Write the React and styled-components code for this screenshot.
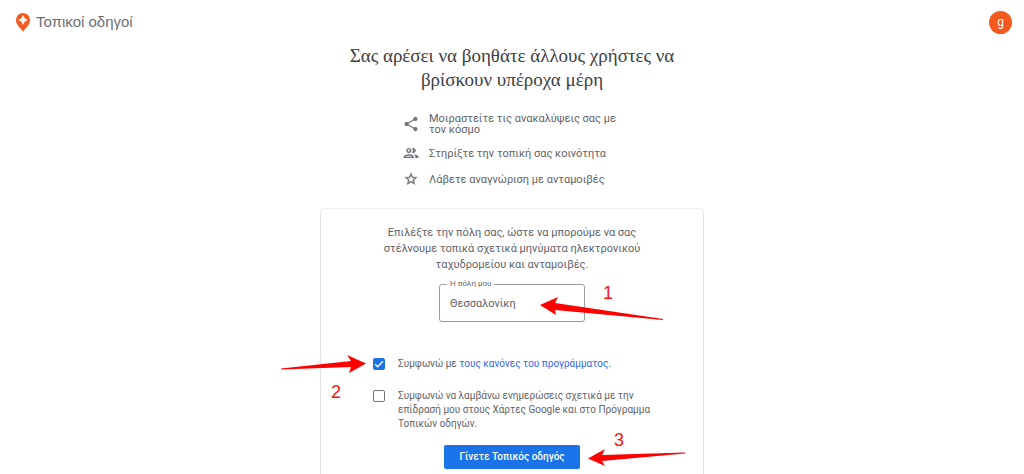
import React from "react";
import styled, { createGlobalStyle } from "styled-components";

const GlobalStyle = createGlobalStyle`
  *, *::before, *::after { box-sizing: border-box; }
  html { scrollbar-width: none; }
  body {
    margin: 0;
    background: #fff;
    color: #5f6368;
    font-family: Roboto, "Noto Sans", sans-serif;
    font-size: 11px;
  }
`;

const Page = styled.div`
  min-height: 100vh;
  display: flex;
  flex-direction: column;
`;

const Header = styled.header`
  display: flex;
  align-items: center;
  justify-content: space-between;
  height: 44px;
  padding: 0 12px 0 16px;
`;

const Brand = styled.a`
  display: flex;
  align-items: center;
  gap: 6px;
  color: #6b6f74;
  font: 15px/20px "Liberation Sans", sans-serif;
  text-decoration: none;
`;

const Avatar = styled.button`
  width: 23px;
  height: 23px;
  padding: 0;
  border: 0;
  border-radius: 50%;
  background: #f4591f;
  color: #fff;
  font: 12px/20px Roboto, sans-serif;
`;

const Main = styled.main`
  display: flex;
  flex: 1;
  flex-direction: column;
  align-items: center;
`;

const Title = styled.h1`
  max-width: 360px;
  margin: 0;
  color: #3c4043;
  font: 400 19px/24px "Liberation Serif", serif;
  text-align: center;
`;

const Benefits = styled.ul`
  display: flex;
  flex-direction: column;
  gap: 10px;
  width: 218px;
  margin: 21px 0 0;
  padding: 0;
  list-style: none;
`;

const Benefit = styled.li`
  display: flex;
  align-items: center;
  gap: 10px;
  min-height: 16px;
  line-height: 11px;

  svg {
    flex: none;
  }
`;

const Card = styled.section`
  position: relative;
  display: flex;
  flex: 1;
  flex-direction: column;
  align-items: center;
  width: 100%;
  max-width: 384px;
  margin-top: 21px;
  padding: 16px 52px 24px;
  border: 1px solid #dfe1e5;
  border-top-color: #eceef0;
  border-radius: 5px;
`;

const Intro = styled.p`
  margin: 0;
  line-height: 16px;
  text-align: center;
`;

const Field = styled.fieldset`
  width: 146px;
  height: 43px;
  margin: 6px 0 0;
  padding: 0 10px;
  border: 1px solid #9a9da1;
  border-radius: 3px;
`;

const FieldLegend = styled.legend`
  margin-left: -3px;
  padding: 0 3px;
  font-size: 8px;
  line-height: 10px;
`;

const FieldInput = styled.input`
  display: block;
  width: 100%;
  height: 28px;
  padding: 0;
  border: 0;
  outline: 0;
  background: transparent;
  color: #5f6368;
  font: 11px Roboto, sans-serif;
`;

const Choices = styled.div`
  display: flex;
  flex-direction: column;
  gap: 18px;
  width: 100%;
  margin-top: 35px;
`;

const Choice = styled.div`
  display: flex;
  align-items: flex-start;
  gap: 13px;
  font-size: 10px;
  line-height: 14px;
`;

const Checkbox = styled.input`
  appearance: none;
  flex: none;
  width: 12px;
  height: 12px;
  margin: 1px 0 0;
  border: 1px solid #6f7276;
  border-radius: 2px;
  background: #fff;

  &:checked {
    border-color: #1a73e8;
    background: #1a73e8 url("data:image/svg+xml,%3Csvg xmlns='http://www.w3.org/2000/svg' viewBox='0 0 10 10'%3E%3Cpath d='M1 5.2 3.7 7.8 9 2.3' fill='none' stroke='white' stroke-width='1.4'/%3E%3C/svg%3E") center / 10px no-repeat;
  }
`;

const RulesLink = styled.a`
  color: #3367e6;
  text-decoration: none;
`;

const Submit = styled.button`
  height: 24px;
  margin-top: 14px;
  padding: 0 15px;
  border: 0;
  border-radius: 2px;
  background: #1a73e8;
  color: #fff;
  font: 500 10px/24px Roboto, sans-serif;
  white-space: nowrap;
`;

const Arrow = styled.svg`
  position: absolute;
  left: ${(p) => p.$x}px;
  top: ${(p) => p.$y}px;
  fill: #fe0000;
  pointer-events: none;
`;

const Step = styled.span`
  position: absolute;
  left: ${(p) => p.$x}px;
  top: ${(p) => p.$y}px;
  color: #fe1010;
  font: 18px/20px "Liberation Sans", sans-serif;
`;

const PinIcon = () => (
  <svg width="14" height="19" viewBox="0 0 14 19" aria-hidden="true">
    <path fill="#f4591f" d="M7 0a7 7 0 0 0-7 7c0 2.500.9 4.200 2.500 6.300C4.200 15.500 5.800 16.500 7 19c1.200-2.500 2.800-3.500 4.500-5.700C13.100 11.200 14 9.500 14 7a7 7 0 0 0-7-7z" />
    <path fill="#fff" d="M7 2.600 8.500 5.500 11.400 7 8.500 8.500 7 11.400 5.500 8.500 2.600 7 5.500 5.500z" stroke="#fff" strokeWidth=".5" />
  </svg>
);

const BenefitIcon = ({ d, viewBox, stroke }) => (
  <svg width="16" height="16" viewBox={viewBox} fill="#74787c" stroke="#74787c" strokeWidth={stroke} aria-hidden="true">
    <path d={d} />
  </svg>
);

const benefits = [
  {
    text: "Μοιραστείτε τις ανακαλύψεις σας με τον κόσμο",
    viewBox: "1 1 22 22",
    stroke: 0,
    d: "M18 16.080c-.76 0-1.440.3-1.960.77L8.910 12.700c.05-.23.09-.46.09-.7s-.04-.47-.09-.7l7.050-4.110c.54.5 1.250.81 2.040.81 1.660 0 3-1.340 3-3s-1.340-3-3-3-3 1.340-3 3c0 .24.04.47.09.7L8.040 9.810C7.500 9.310 6.790 9 6 9c-1.660 0-3 1.340-3 3s1.340 3 3 3c.79 0 1.500-.31 2.040-.81l7.120 4.160c-.05.21-.08.43-.08.65 0 1.610 1.310 2.920 2.920 2.920s2.920-1.310 2.920-2.920-1.310-2.920-2.920-2.920z",
  },
  {
    text: "Στηρίξτε την τοπική σας κοινότητα",
    viewBox: "1 1 22 22",
    stroke: 0.2,
    d: "M9 13.750c-2.340 0-7 1.170-7 3.500V19h14v-1.750c0-2.330-4.660-3.500-7-3.500zM4.340 17c.84-.58 2.870-1.250 4.660-1.250s3.820.67 4.660 1.250H4.340zM9 12c1.930 0 3.500-1.570 3.500-3.500S10.930 5 9 5 5.500 6.570 5.500 8.500 7.070 12 9 12zm0-5c.83 0 1.500.67 1.500 1.500S9.830 10 9 10s-1.500-.67-1.500-1.500S8.170 7 9 7zm7.040 6.810c1.160.84 1.960 1.960 1.960 3.440V19h4v-1.750c0-2.020-3.500-3.170-5.960-3.440zM15 12c1.930 0 3.500-1.570 3.500-3.500S16.930 5 15 5c-.54 0-1.040.13-1.500.35.63.89 1 1.980 1 3.150s-.37 2.260-1 3.150c.46.22.96.35 1.500.35z",
  },
  {
    text: "Λάβετε αναγνώριση με ανταμοιβές",
    viewBox: "-1 -1 26 26",
    stroke: 0.8,
    d: "M22 9.240l-7.190-.62L12 2 9.190 8.630 2 9.240l5.460 4.730L5.820 21 12 17.270 18.180 21l-1.630-7.030L22 9.240zM12 15.400l-3.760 2.270 1-4.280-3.320-2.880 4.380-.38L12 6.100l1.710 4.040 4.380.38-3.320 2.880 1 4.280L12 15.400z",
  },
];

export default function App() {
  return (
    <Page>
      <GlobalStyle />
      <Header>
        <Brand href="#">
          <PinIcon />
          Τοπικοί οδηγοί
        </Brand>
        <Avatar type="button">g</Avatar>
      </Header>
      <Main>
        <Title>Σας αρέσει να βοηθάτε άλλους χρήστες να βρίσκουν υπέροχα μέρη</Title>
        <Benefits>
          {benefits.map((item) => (
            <Benefit key={item.text}>
              <BenefitIcon d={item.d} viewBox={item.viewBox} stroke={item.stroke} />
              <span>{item.text}</span>
            </Benefit>
          ))}
        </Benefits>
        <Card>
          <Intro>
            Επιλέξτε την πόλη σας, ώστε να μπορούμε να σας στέλνουμε τοπικά σχετικά
            μηνύματα ηλεκτρονικού ταχυδρομείου και ανταμοιβές.
          </Intro>
          <Field>
            <FieldLegend>
              <label htmlFor="city">Η πόλη μου</label>
            </FieldLegend>
            <FieldInput id="city" type="text" defaultValue="Θεσσαλονίκη" />
          </Field>
          <Choices>
            <Choice>
              <Checkbox id="rules" type="checkbox" defaultChecked />
              <label htmlFor="rules">
                Συμφωνώ με <RulesLink href="#">τους κανόνες του προγράμματος.</RulesLink>
              </label>
            </Choice>
            <Choice>
              <Checkbox id="updates" type="checkbox" />
              <label htmlFor="updates">
                Συμφωνώ να λαμβάνω ενημερώσεις σχετικά με την επίδρασή μου στους
                Χάρτες Google και στο Πρόγραμμα Τοπικών οδηγών.
              </label>
            </Choice>
          </Choices>
          <Submit type="button">Γίνετε Τοπικός οδηγός</Submit>

          <Step $x={282} $y={74}>1</Step>
          <Arrow $x={219} $y={87} width="124" height="24" viewBox="0 0 124 24" aria-hidden="true">
            <path d="M0 9 18 1 15 7 123 23 123 24 15 14 16 19z" />
          </Arrow>
          <Step $x={10} $y={173}>2</Step>
          <Arrow $x={-40} $y={145} width="85" height="20" viewBox="0 0 85 20" aria-hidden="true">
            <path d="M85 9.500 66 1 70 7 0 14.500 0 15.500 70 13 68 19z" />
          </Arrow>
          <Step $x={293} $y={221}>3</Step>
          <Arrow $x={267} $y={240} width="97" height="18" viewBox="0 0 97 18" aria-hidden="true">
            <path d="M0 9.500 17 0 14 6 97 3.500 97 4.500 14 12 17 17z" />
          </Arrow>
        </Card>
      </Main>
    </Page>
  );
}
